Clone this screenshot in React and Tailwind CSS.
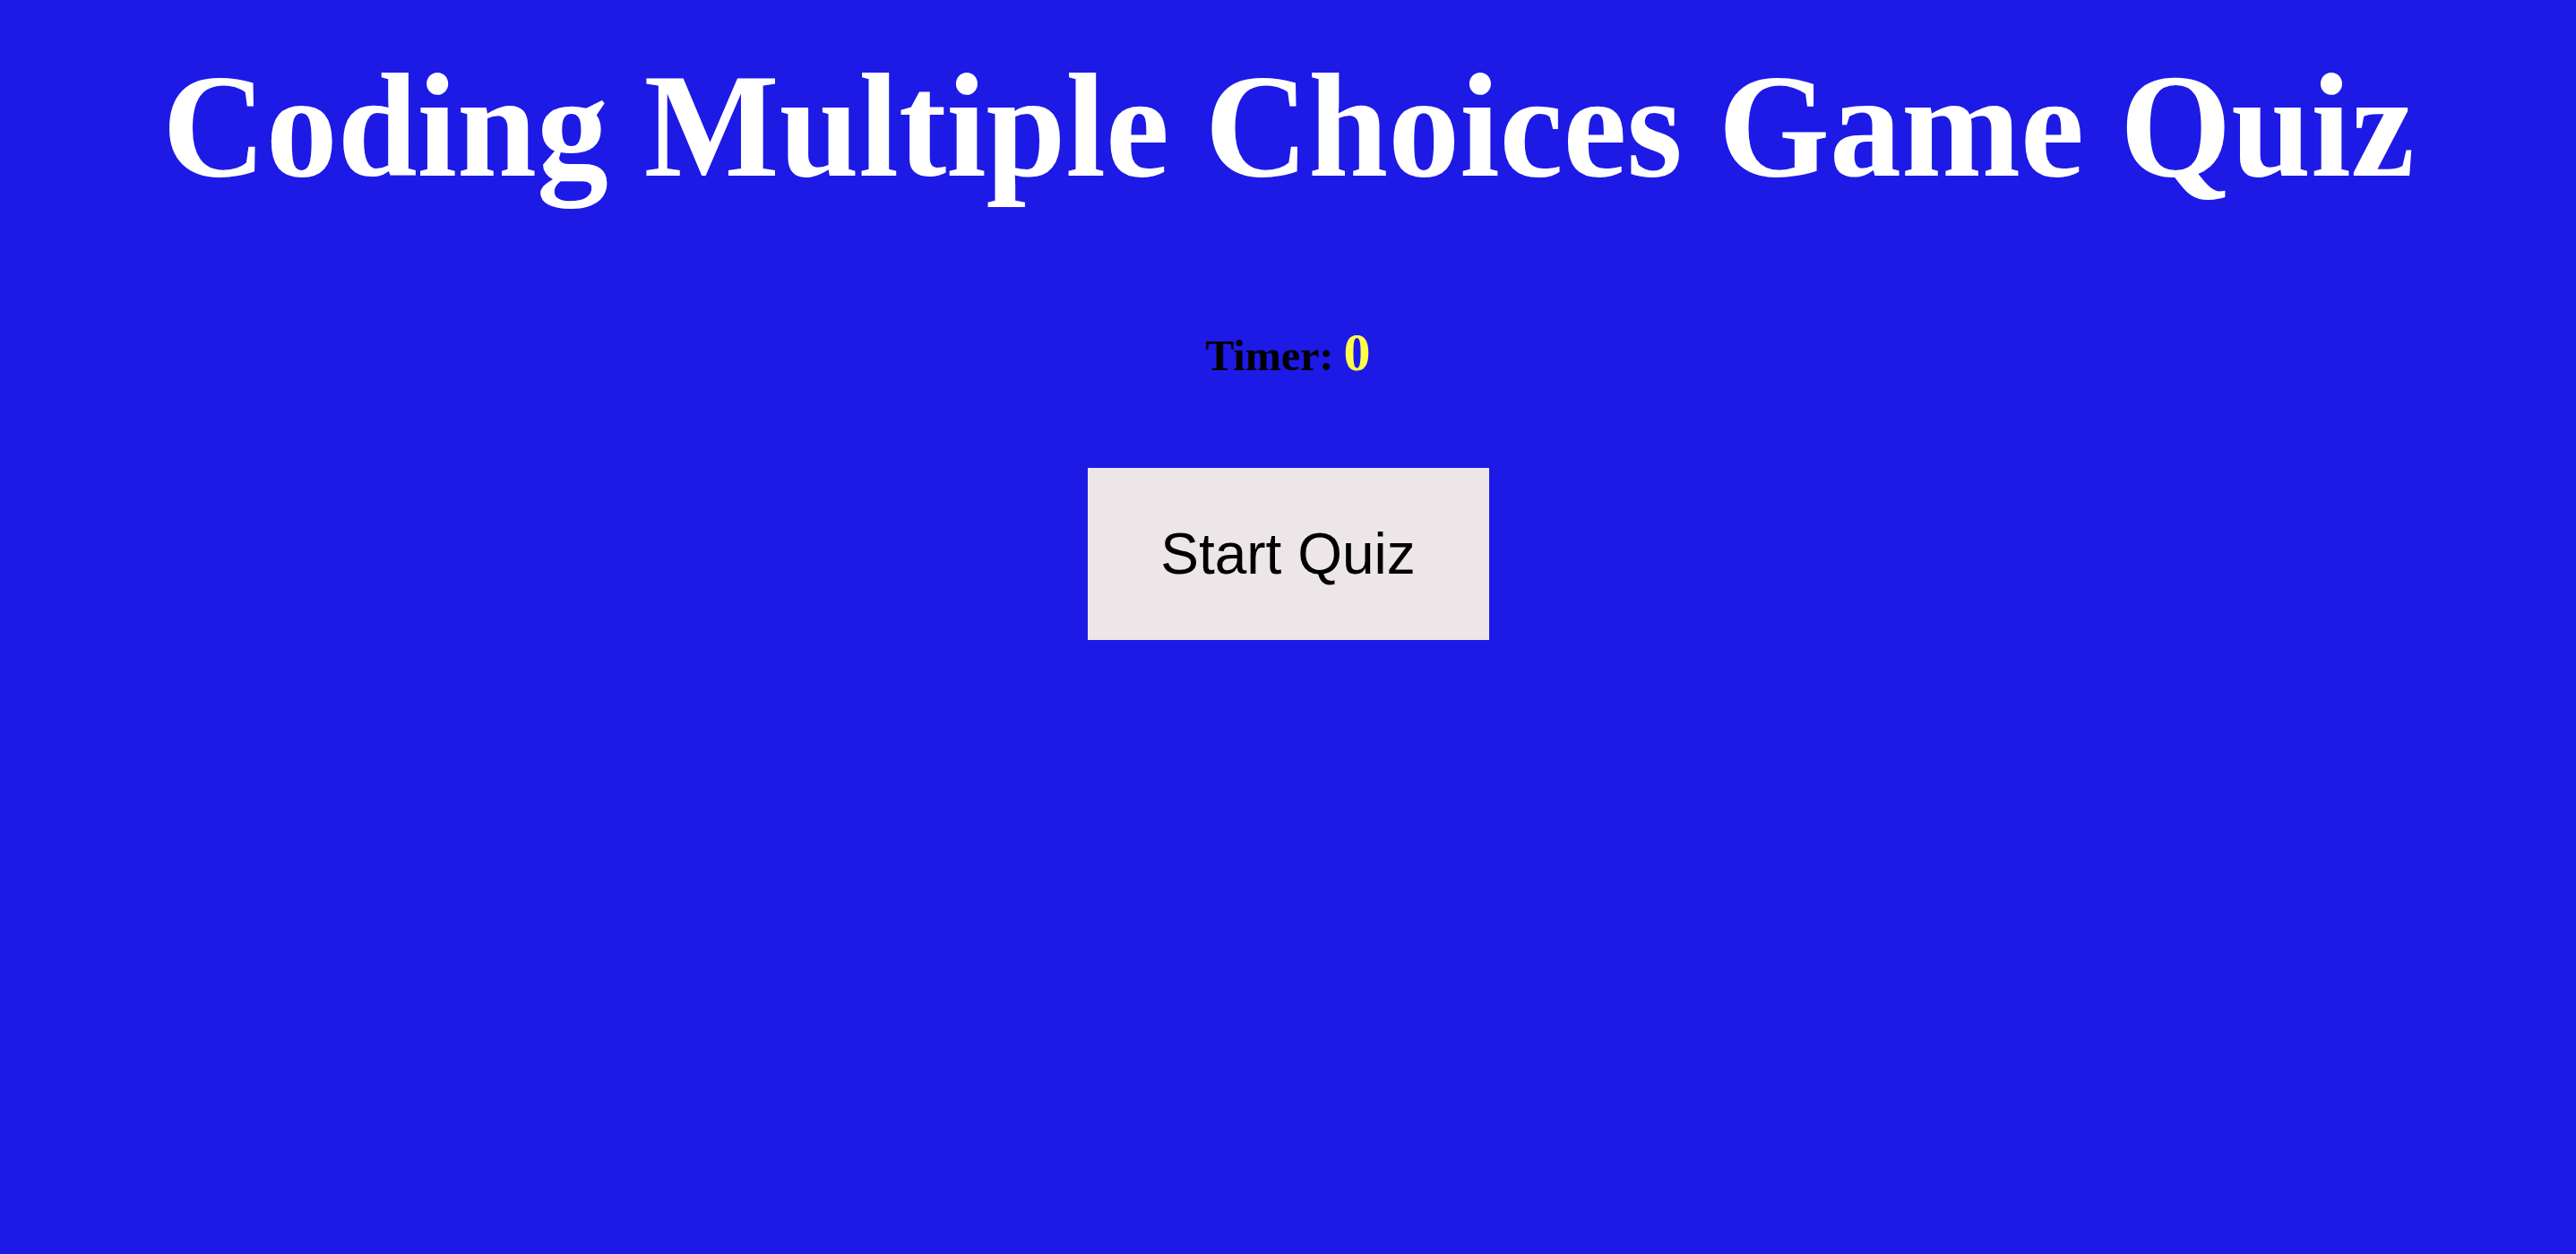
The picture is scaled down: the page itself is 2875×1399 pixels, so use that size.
export default function App() {
  return (
    <div className="flex min-h-[1399px] w-full flex-col items-center bg-[#1d1ae6] font-['Liberation_Serif',serif]">
      <h1 className="mt-[50px] scale-x-[0.963] whitespace-nowrap text-[166px] font-bold leading-[180px] text-white">
        Coding Multiple Choices Game Quiz
      </h1>
      <p className="mt-[133px] flex items-baseline gap-[11px] text-[48px] font-bold leading-none text-black">
        Timer: <span className="text-[60px] text-[#ffff4a]">0</span>
      </p>
      <button className="mt-[99px] h-[192px] w-[448px] bg-[#ece6e8] font-['Liberation_Sans',sans-serif] text-[64px] text-black">
        Start Quiz
      </button>
    </div>
  )
}
